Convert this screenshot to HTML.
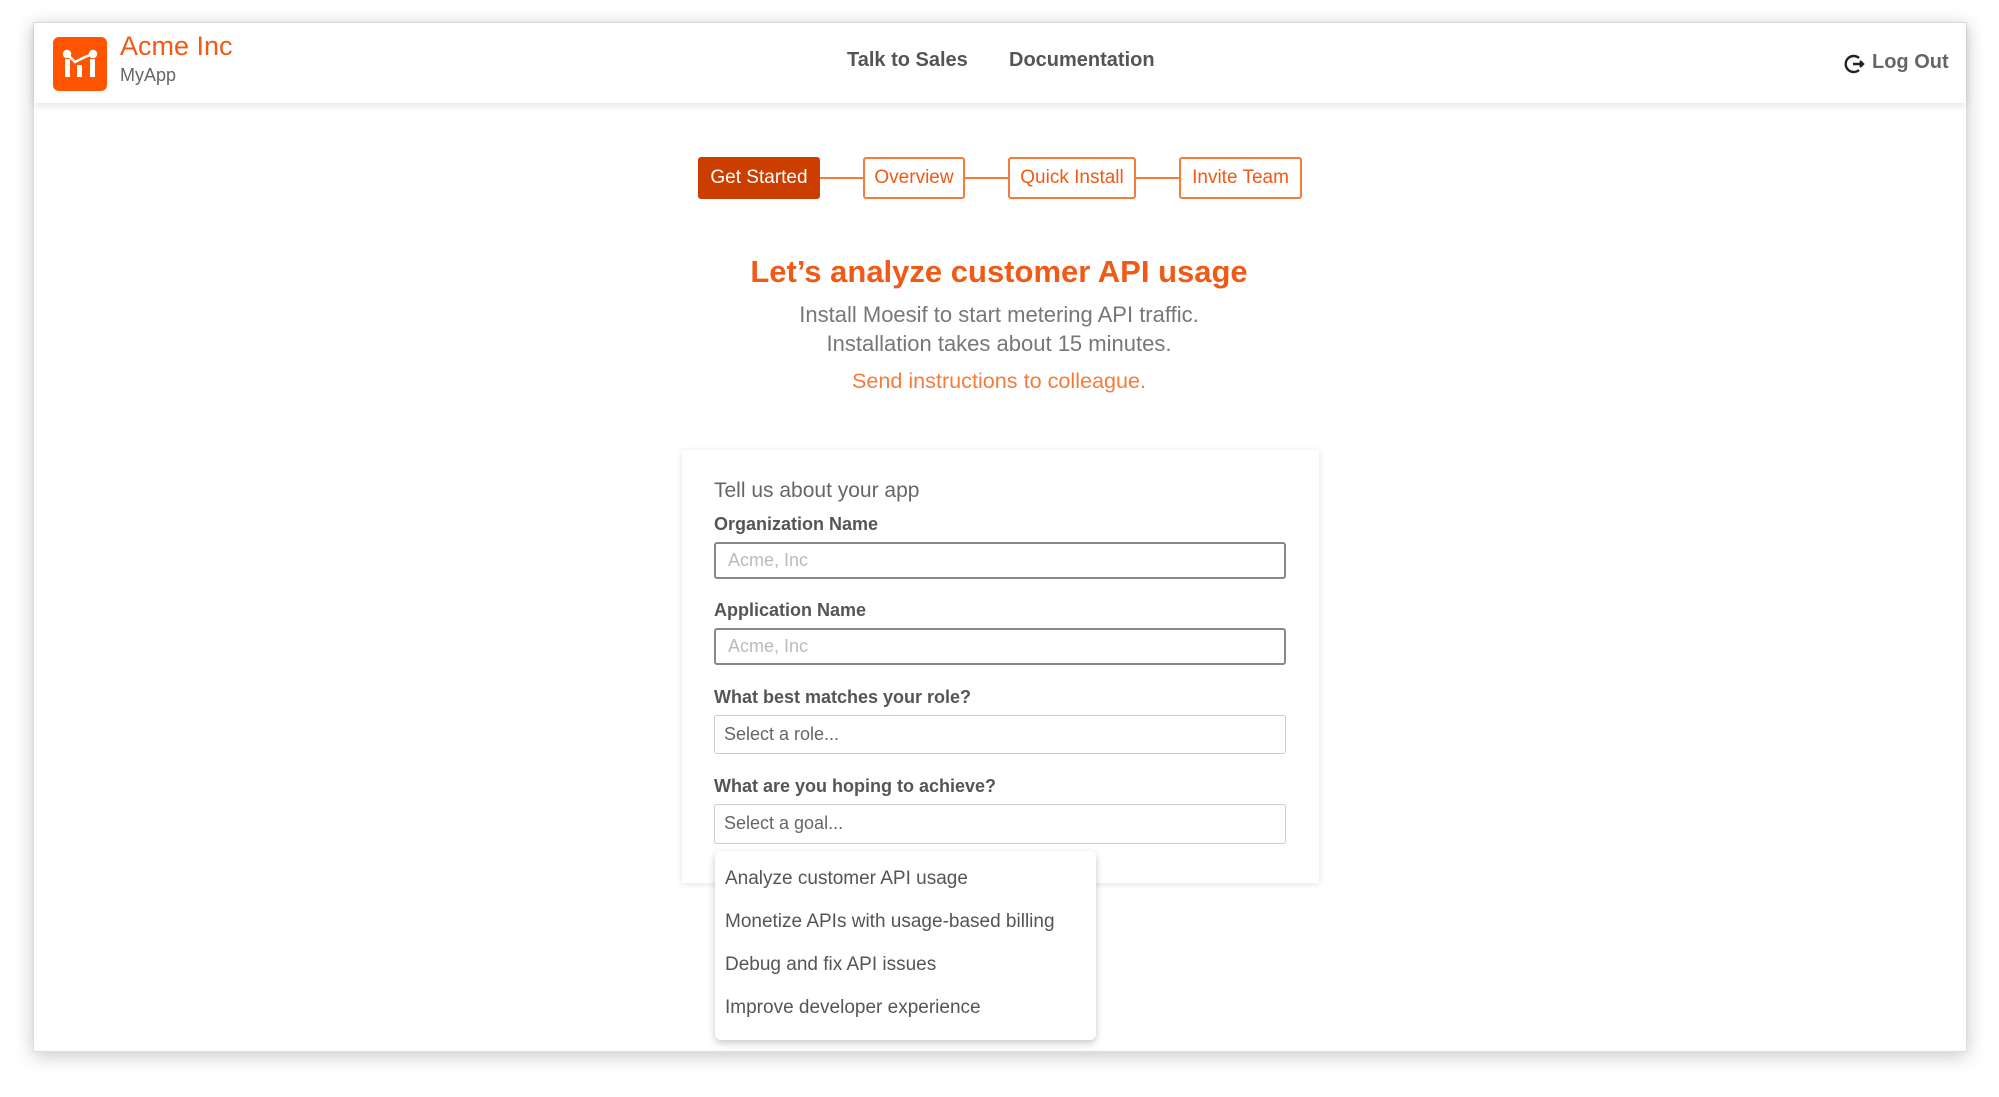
<!DOCTYPE html>
<html><head><meta charset="utf-8"><style>
*{box-sizing:border-box;margin:0;padding:0}
body{width:1999px;height:1097px;background:#fff;font-family:"Liberation Sans",Arial,sans-serif;position:relative;overflow:hidden}
.win{position:absolute;left:33px;top:22px;width:1934px;height:1030px;background:#fff;box-shadow:0 4px 18px rgba(0,0,0,.22);border:1px solid #ddd}
.hdr{position:absolute;left:0;top:0;width:100%;height:80px;background:#fff;box-shadow:0 3px 8px rgba(0,0,0,.1)}
.a{position:absolute;white-space:nowrap}
.step{position:absolute;top:134px;height:42px;border:2px solid #f47c3c;border-radius:3px;color:#f05a16;font-size:19px;line-height:38px;text-align:center;background:#fff}
.line{position:absolute;top:154px;height:2px;background:#f47c3c}
.lbl{position:absolute;left:32px;font-size:18px;font-weight:bold;color:#555}
.inp{position:absolute;left:32px;width:572px;border-radius:3px;font-size:18px;padding-left:12px}
.dd{position:absolute;width:381px;height:189px;background:#fff;border-radius:6px;box-shadow:0 3px 8px rgba(0,0,0,.22)}
.dd div{position:absolute;left:10px;font-size:19px;color:#555}
</style></head><body>
<div class="win">
<div class="hdr">
 <svg class="a" style="left:19px;top:14px" width="54" height="54" viewBox="0 0 54 54"><rect width="54" height="54" rx="6" fill="#ff5500"/><g fill="#fff" stroke="#fff" stroke-width="2.5"><circle cx="14" cy="17" r="3"/><circle cx="40" cy="17" r="3"/><path d="M14 17 L22 25 L32 20 L40 17" fill="none"/><rect x="12" y="22" width="5" height="18" stroke="none"/><rect x="24" y="28" width="5" height="12" stroke="none"/><rect x="37" y="22" width="5" height="18" stroke="none"/></g></svg>
 <div class="a" style="left:86px;top:8px;font-size:27px;color:#f05a16">Acme Inc</div>
 <div class="a" style="left:86px;top:42px;font-size:18px;color:#666">MyApp</div>
 <div class="a" style="left:813px;top:26px;font-size:20px;font-weight:bold;color:#555">Talk to Sales</div>
 <div class="a" style="left:975px;top:26px;font-size:20px;font-weight:bold;color:#555">Documentation</div>
 <svg class="a" style="left:1810px;top:30px" width="22" height="22" viewBox="0 0 22 22"><path d="M15 5 A8 8 0 1 0 15 17" fill="none" stroke="#222" stroke-width="2.4"/><path d="M9 11 H19 M16 8 L19 11 L16 14" fill="none" stroke="#222" stroke-width="2.4"/></svg>
 <div class="a" style="left:1838px;top:28px;font-size:20px;font-weight:bold;color:#666">Log Out</div>
</div>
<div class="line" style="left:786px;width:46px"></div>
<div class="line" style="left:930px;width:46px"></div>
<div class="line" style="left:1100px;width:46px"></div>
<div class="step" style="left:664px;width:122px;background:#cc3e00;border-color:#cc3e00;color:#fff">Get Started</div>
<div class="step" style="left:829px;width:102px">Overview</div>
<div class="step" style="left:974px;width:128px">Quick Install</div>
<div class="step" style="left:1145px;width:123px">Invite Team</div>
<div class="a" style="left:0;width:1930px;text-align:center;top:231px;font-size:31px;font-weight:bold;color:#f05a16">Let’s analyze customer API usage</div>
<div class="a" style="left:0;width:1930px;text-align:center;top:277px;font-size:22px;color:#777;line-height:29px">Install Moesif to start metering API traffic.<br>Installation takes about 15 minutes.</div>
<div class="a" style="left:0;width:1930px;text-align:center;top:345px;font-size:21.6px;color:#f47c3c">Send instructions to colleague.</div>
<div class="a" style="left:648px;top:427px;width:637px;height:433px;background:#fff;box-shadow:0 1px 6px rgba(0,0,0,.12)">
 <div class="a" style="left:32px;top:29px;font-size:21px;color:#666">Tell us about your app</div>
 <div class="lbl" style="top:64px">Organization Name</div>
 <div class="inp" style="top:92px;height:37px;border:2px solid #888;color:#bbb;line-height:33px">Acme, Inc</div>
 <div class="lbl" style="top:150px">Application Name</div>
 <div class="inp" style="top:178px;height:37px;border:2px solid #888;color:#bbb;line-height:33px">Acme, Inc</div>
 <div class="lbl" style="top:237px">What best matches your role?</div>
 <div class="inp" style="top:265px;height:39px;border:1.5px solid #ccc;color:#666;line-height:36px;padding-left:9px">Select a role...</div>
 <div class="lbl" style="top:326px">What are you hoping to achieve?</div>
 <div class="inp" style="top:354px;height:40px;border:1.5px solid #ccc;color:#666;line-height:37px;padding-left:9px">Select a goal...</div>
</div>
<div class="dd" style="left:681px;top:828px">
 <div style="top:17px">Analyze customer API usage</div>
 <div style="top:60px">Monetize APIs with usage-based billing</div>
 <div style="top:103px">Debug and fix API issues</div>
 <div style="top:146px">Improve developer experience</div>
</div>
</div>
</body></html>
